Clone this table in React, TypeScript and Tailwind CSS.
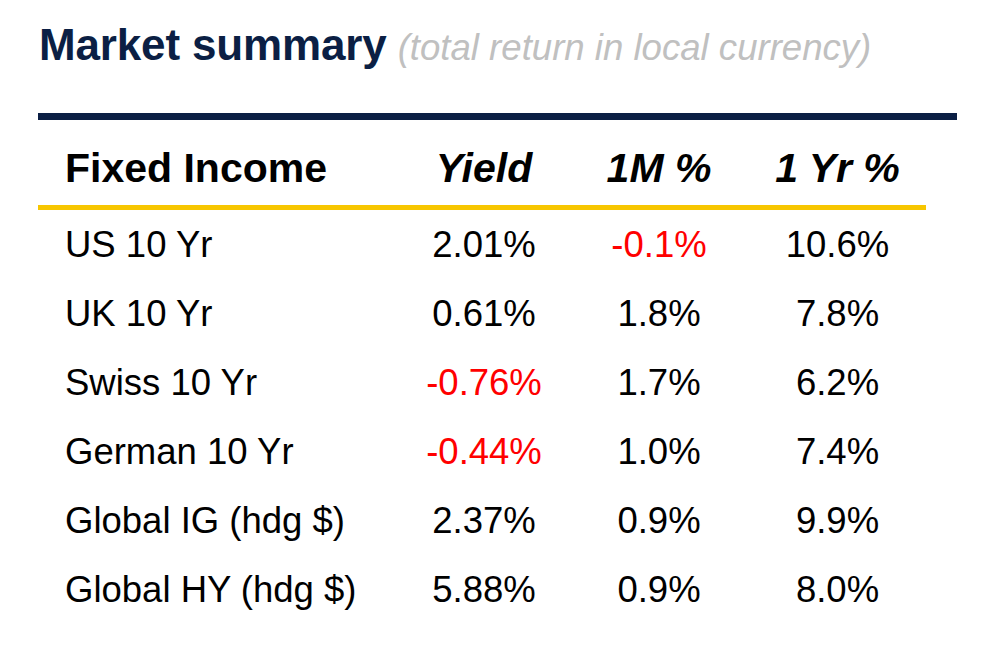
import React from 'react';

interface Row {
  name: string;
  yld: string;
  m1: string;
  y1: string;
}

const rows: Row[] = [
  { name: 'US 10 Yr', yld: '2.01%', m1: '-0.1%', y1: '10.6%' },
  { name: 'UK 10 Yr', yld: '0.61%', m1: '1.8%', y1: '7.8%' },
  { name: 'Swiss 10 Yr', yld: '-0.76%', m1: '1.7%', y1: '6.2%' },
  { name: 'German 10 Yr', yld: '-0.44%', m1: '1.0%', y1: '7.4%' },
  { name: 'Global IG (hdg $)', yld: '2.37%', m1: '0.9%', y1: '9.9%' },
  { name: 'Global HY (hdg $)', yld: '5.88%', m1: '0.9%', y1: '8.0%' },
];

// negative numbers are shown in red
const cell = (v: string) => (v.startsWith('-') ? 'text-[#ff0000]' : 'text-black');

const App: React.FC = () => {
  return (
    <div className="w-[990px] h-[650px] bg-white pl-[38px] pt-[23px] font-['Liberation_Sans',Arial,sans-serif] overflow-hidden">
      <div className="flex items-baseline pl-[1px] leading-none whitespace-nowrap">
        <span className="text-[44px] font-bold text-[#0b1f44] tracking-[-0.15px]">Market summary</span>
        <span className="ml-[11px] text-[36.6px] italic text-[#c0c0c0]">(total return in local currency)</span>
      </div>

      <div className="mt-[46px] w-[919px] h-[7px] bg-[#0b1f44]"></div>

      <div className="w-[888px]">
        <div className="grid grid-cols-[361px_170px_180px_177px] pt-[28px] pb-[16px] border-b-[5px] border-[#f7c600] text-[41px] font-bold leading-none text-black whitespace-nowrap">
          <div className="pl-[27px]">Fixed Income</div>
          <div className="text-center italic">Yield</div>
          <div className="text-center italic">1M %</div>
          <div className="text-center italic">1 Yr %</div>
        </div>

        {rows.map(r => (
          <div
            key={r.name}
            className="grid grid-cols-[361px_170px_180px_177px] h-[69px] text-[36.5px] leading-[69px] whitespace-nowrap"
          >
            <div className="pl-[27px] text-black">{r.name}</div>
            <div className={`text-center ${cell(r.yld)}`}>{r.yld}</div>
            <div className={`text-center ${cell(r.m1)}`}>{r.m1}</div>
            <div className={`text-center ${cell(r.y1)}`}>{r.y1}</div>
          </div>
        ))}
      </div>
    </div>
  );
};

export default App;
